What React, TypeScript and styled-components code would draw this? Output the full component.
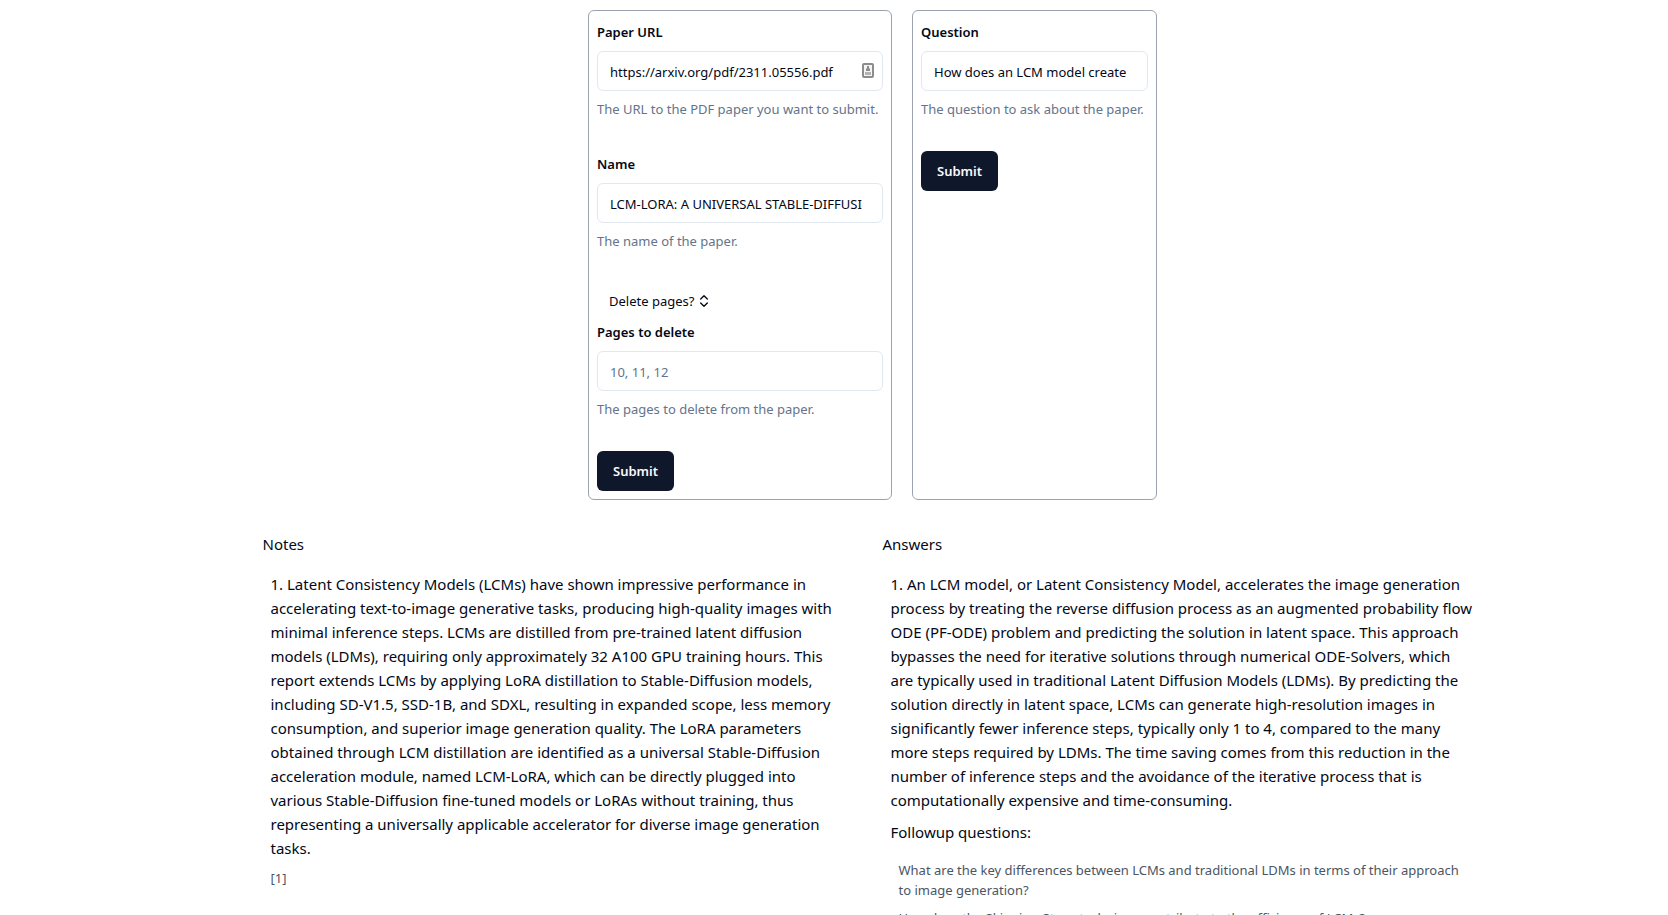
import React from 'react';
import styled, { createGlobalStyle } from 'styled-components';
import { ChevronsUpDown } from 'lucide-react';

const GlobalStyle = createGlobalStyle`
  *, *::before, *::after { box-sizing: border-box; }
  body {
    margin: 0;
    background: #ffffff;
    color: #020817;
    font-family: "Segoe UI", "Noto Sans", "Open Sans", sans-serif;
    font-size: 15px;
    line-height: 24px;
  }
  p, h2, ul { margin: 0; padding: 0; font-size: inherit; font-weight: 400; }
  ul { list-style: none; }
`;

const Page = styled.main`
  display: flex;
  flex-direction: column;
  align-items: center;
  gap: 32px;
  padding: 10px 0 16px 77px;
`;

const Forms = styled.div`
  display: flex;
  gap: 20px;
`;

const FormCard = styled.form<{ $width: number }>`
  display: flex;
  flex-direction: column;
  align-items: stretch;
  gap: 32px;
  width: ${({ $width }) => $width}px;
  padding: 8px;
  border: 1px solid #9ca3af;
  border-radius: 6px;
`;

const Field = styled.div`
  display: flex;
  flex-direction: column;
  gap: 8px;
`;

const Label = styled.label`
  padding-top: 2px;
  font-size: 13px;
  font-weight: 600;
  line-height: 22px;
`;

const InputWrap = styled.div`
  position: relative;
  display: flex;
`;

const Input = styled.input`
  width: 100%;
  height: 40px;
  padding: 10px 20px 8px 12px;
  border: 1px solid #e2e8f0;
  border-radius: 6px;
  background: #ffffff;
  color: #020817;
  font-family: inherit;
  font-size: 13px;
  line-height: 20px;
  &::placeholder { color: #64748b; opacity: 1; }
`;

const AutofillIcon = styled.svg`
  position: absolute;
  top: 12px;
  right: 8px;
`;

const Hint = styled.p`
  color: #64748b;
  font-size: 13px;
  line-height: 20px;
  white-space: nowrap;
`;

const ToggleButton = styled.button`
  display: flex;
  align-items: center;
  align-self: flex-start;
  gap: 2px;
  height: 36px;
  padding: 0 12px;
  border: 0;
  border-radius: 6px;
  background: transparent;
  color: #020817;
  font-family: inherit;
  font-size: 13px;
  line-height: 20px;
`;

const SubmitButton = styled.button`
  align-self: flex-start;
  height: 40px;
  padding: 8px 16px;
  border: 0;
  border-radius: 6px;
  background: #0f172a;
  color: #f8fafc;
  font-family: inherit;
  font-size: 13px;
  font-weight: 600;
  line-height: 20px;
`;

const Results = styled.div`
  display: grid;
  grid-template-columns: 1fr 1fr;
  gap: 20px;
  width: 100%;
  max-width: 1220px;
`;

const Column = styled.section`
  display: flex;
  flex-direction: column;
  gap: 16px;
`;

const Entry = styled.article`
  display: flex;
  flex-direction: column;
  gap: 8px;
  padding: 0 8px;
`;

const Body = styled.p`
  white-space: pre-line;
`;

const Small = styled.p`
  color: #4b5563;
  font-size: 13px;
  line-height: 20px;
  white-space: pre-line;
`;

const Questions = styled.ul`
  display: flex;
  flex-direction: column;
  gap: 8px;
  padding: 8px 8px 0;
`;

const note = `1. Latent Consistency Models (LCMs) have shown impressive performance in
accelerating text-to-image generative tasks, producing high-quality images with
minimal inference steps. LCMs are distilled from pre-trained latent diffusion
models (LDMs), requiring only approximately 32 A100 GPU training hours. This
report extends LCMs by applying LoRA distillation to Stable-Diffusion models,
including SD-V1.5, SSD-1B, and SDXL, resulting in expanded scope, less memory
consumption, and superior image generation quality. The LoRA parameters
obtained through LCM distillation are identified as a universal Stable-Diffusion
acceleration module, named LCM-LoRA, which can be directly plugged into
various Stable-Diffusion fine-tuned models or LoRAs without training, thus
representing a universally applicable accelerator for diverse image generation
tasks.`;

const answer = `1. An LCM model, or Latent Consistency Model, accelerates the image generation
process by treating the reverse diffusion process as an augmented probability flow
ODE (PF-ODE) problem and predicting the solution in latent space. This approach
bypasses the need for iterative solutions through numerical ODE-Solvers, which
are typically used in traditional Latent Diffusion Models (LDMs). By predicting the
solution directly in latent space, LCMs can generate high-resolution images in
significantly fewer inference steps, typically only 1 to 4, compared to the many
more steps required by LDMs. The time saving comes from this reduction in the
number of inference steps and the avoidance of the iterative process that is
computationally expensive and time-consuming.`;

const followups = [
  `What are the key differences between LCMs and traditional LDMs in terms of their approach
to image generation?`,
  'How does the Skipping-Steps technique contribute to the efficiency of LCMs?',
];

interface TextFieldProps {
  id: string;
  label: string;
  hint: string;
  value?: string;
  placeholder?: string;
  autofill?: boolean;
}

function TextField({ id, label, hint, value, placeholder, autofill }: TextFieldProps) {
  return (
    <Field>
      <Label htmlFor={id}>{label}</Label>
      <InputWrap>
        <Input id={id} type="text" defaultValue={value} placeholder={placeholder} />
        {autofill && (
          <AutofillIcon width="14" height="16" viewBox="0 0 14 16" aria-hidden="true">
            <rect x="2" y="1" width="10" height="13" rx="1" fill="#f4f4f4" stroke="#8c8c8c" strokeWidth="2" />
            <path d="M6 3h2v2l1 1v2H5V6l1-1z" fill="#8c8c8c" />
            <path d="M4 9h6v3H4z" fill="#b4b4b4" />
          </AutofillIcon>
        )}
      </InputWrap>
      <Hint>{hint}</Hint>
    </Field>
  );
}

const CollapsibleGroup = styled.div`
  display: flex;
  flex-direction: column;
`;

export default function App() {
  const [open, setOpen] = React.useState(true);
  const stay = (event: React.FormEvent) => event.preventDefault();
  return (
    <>
      <GlobalStyle />
      <Page>
        <Forms>
          <FormCard $width={304} onSubmit={stay}>
            <TextField
              id="paper-url"
              label="Paper URL"
              value="https://arxiv.org/pdf/2311.05556.pdf"
              hint="The URL to the PDF paper you want to submit."
              autofill
            />
            <TextField
              id="paper-name"
              label="Name"
              value="LCM-LORA: A UNIVERSAL STABLE-DIFFUSION ACCELERATION MODULE"
              hint="The name of the paper."
            />
            <CollapsibleGroup>
              <ToggleButton type="button" aria-expanded={open} onClick={() => setOpen(!open)}>
                Delete pages?
                <ChevronsUpDown size={16} />
              </ToggleButton>
              {open && (
                <TextField
                  id="pages"
                  label="Pages to delete"
                  placeholder="10, 11, 12"
                  hint="The pages to delete from the paper."
                />
              )}
            </CollapsibleGroup>
            <SubmitButton type="submit">Submit</SubmitButton>
          </FormCard>
          <FormCard $width={245} onSubmit={stay}>
            <TextField
              id="question"
              label="Question"
              value="How does an LCM model create time savings?"
              hint="The question to ask about the paper."
            />
            <SubmitButton type="submit">Submit</SubmitButton>
          </FormCard>
        </Forms>
        <Results>
          <Column>
            <h2>Notes</h2>
            <Entry>
              <Body>{note}</Body>
              <Small>[1]</Small>
            </Entry>
          </Column>
          <Column>
            <h2>Answers</h2>
            <Entry>
              <Body>{answer}</Body>
              <Body>Followup questions:</Body>
              <Questions>
                {followups.map((question) => (
                  <li key={question}>
                    <Small>{question}</Small>
                  </li>
                ))}
              </Questions>
            </Entry>
          </Column>
        </Results>
      </Page>
    </>
  );
}
